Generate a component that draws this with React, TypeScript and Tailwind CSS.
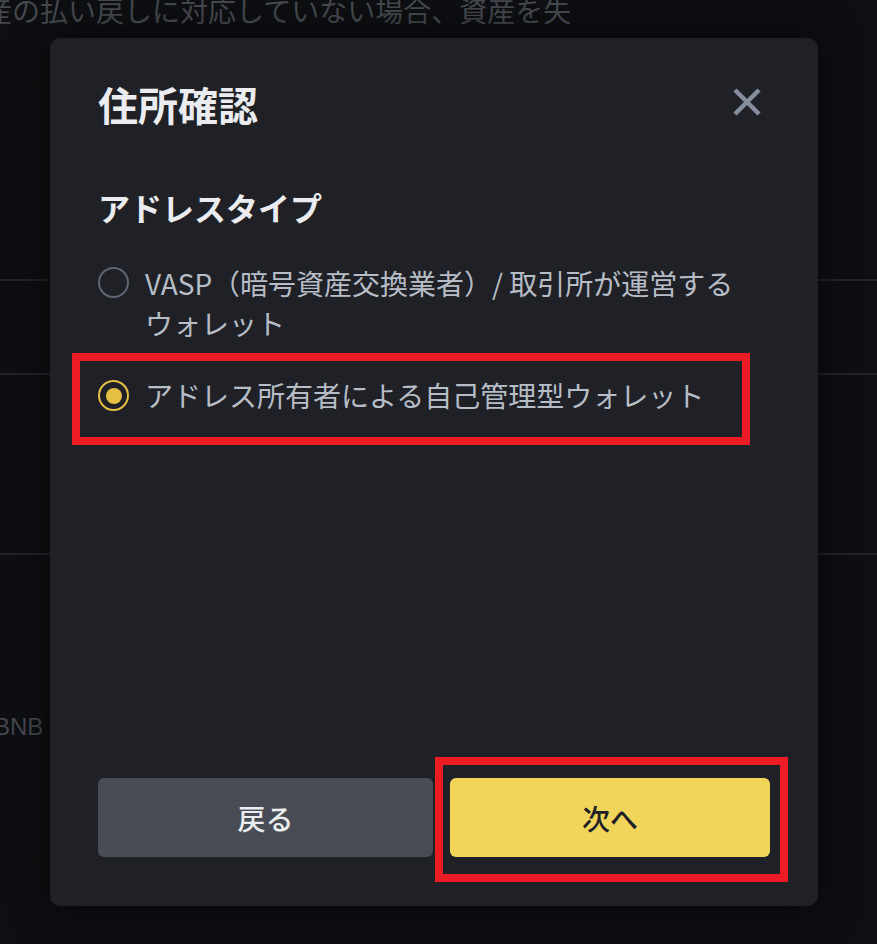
import React from "react";

const font = { fontFamily: '"Noto Sans CJK JP", "Noto Sans", sans-serif' };

export default function App() {
  return (
    <div
      className="relative w-[877px] h-[944px] overflow-hidden bg-[#0e0f12]"
      style={font}
    >
      {/* background page */}
      <div className="flex flex-col">
        <div className="ml-[-44px] mt-[-6px] whitespace-nowrap text-[28px] leading-[32px] text-[#45484e]">
          資産の払い戻しに対応していない場合、資産を失
        </div>
        <div className="mt-[253px] h-[2px] w-full bg-[#222429]" />
        <div className="mt-[92px] h-[2px] w-full bg-[#222429]" />
        <div className="mt-[178px] h-[2px] w-full bg-[#222429]" />
        <div
          className="ml-[-6px] mt-[157px] text-[24px] leading-[30px] text-[#44474d]"
          style={{ fontFamily: '"Liberation Sans", Arial, sans-serif' }}
        >
          BNB
        </div>
      </div>

      {/* modal */}
      <div className="absolute left-[50px] top-[38px] flex h-[868px] w-[768px] flex-col rounded-[10px] bg-[#1f2126] pl-[48px] pr-[56px] pt-[42px] pb-[49px] shadow-[0_0_40px_rgba(0,0,0,0.6)]">
        <div className="flex items-center justify-between">
          <h1 className="text-[40px] font-semibold leading-[48px] text-[#eaecef]">
            住所確認
          </h1>
          <svg width="30" height="30" viewBox="0 0 30 30" className="mt-[-4px]">
            <path
              d="M3 3 L27 27 M27 3 L3 27"
              stroke="#848e9c"
              strokeWidth="4.5"
              strokeLinecap="butt"
            />
          </svg>
        </div>

        <h2 className="mt-[59px] text-[32px] font-semibold leading-[40px] text-[#eaecef]">
          アドレスタイプ
        </h2>

        <div className="mt-[36px] flex items-start gap-[16px]">
          <div className="mt-[4px] h-[31px] w-[31px] shrink-0 rounded-full border-2 border-[#5e6673]" />
          <div className="max-w-[596px] text-[28px] leading-[40px] text-[#b7bdc6]">
            VASP（暗号資産交換業者）/ 取引所が運営するウォレット
          </div>
        </div>

        <div className="mt-[32px] flex items-start gap-[16px]">
          <div className="mt-[5px] flex h-[31px] w-[31px] shrink-0 items-center justify-center rounded-full border-2 border-[#e6bf45]">
            <div className="h-[16px] w-[16px] rounded-full bg-[#e6bf45]" />
          </div>
          <div className="text-[28px] leading-[40px] text-[#b7bdc6]">
            アドレス所有者による自己管理型ウォレット
          </div>
        </div>

        <div className="mt-auto mr-[-8px] flex gap-[17px]">
          <button className="flex h-[79px] w-[335px] shrink-0 items-center justify-center rounded-[6px] bg-[#474c55] text-[28px] font-medium text-[#eaecef]">
            戻る
          </button>
          <button className="flex h-[79px] w-[320px] shrink-0 items-center justify-center rounded-[6px] bg-[#f0d55a] text-[28px] font-medium text-[#1e2026]">
            次へ
          </button>
        </div>
      </div>

      {/* annotation boxes */}
      <div className="absolute left-[72px] top-[353px] h-[92px] w-[678px] border-[8px] border-[#ed1c24]" />
      <div className="absolute left-[435px] top-[757px] h-[125px] w-[353px] border-[8px] border-[#ed1c24]" />
    </div>
  );
}
